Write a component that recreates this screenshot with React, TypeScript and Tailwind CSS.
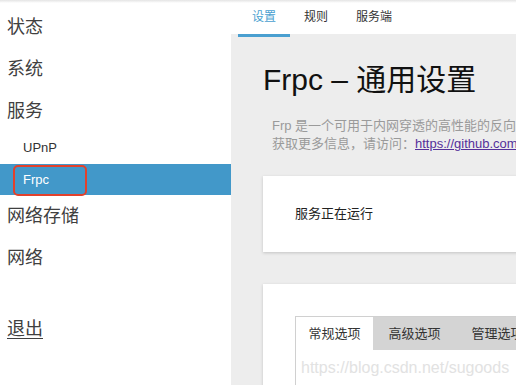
const font = { fontFamily: '"Liberation Sans", "Noto Sans CJK SC", sans-serif' };

const navTop = ['状态', '系统', '服务'];
const subItems = ['UPnP', 'Frpc'];
const navBottom = ['网络存储', '网络'];
const headTabs = ['设置', '规则', '服务端'];
const innerTabs = ['常规选项', '高级选项', '管理选项'];

export default function App() {
  return (
    <div
      className="relative flex w-[516px] h-[385px] overflow-hidden bg-white text-[#404040]"
      style={font}
    >
      <div className="pointer-events-none absolute inset-x-0 top-0 h-[3px] bg-gradient-to-b from-[#e4e4e4] to-transparent z-10" />

      {/* sidebar */}
      <aside className="w-[231px] shrink-0 bg-white pt-[6px]">
        {navTop.map((n) => (
          <div key={n} className="h-[42px] last:h-[40px] flex items-center pl-[7px] text-[18px] text-[#404040]">
            {n}
          </div>
        ))}
        {subItems.map((s) => {
          const active = s === 'Frpc';
          return (
            <div
              key={s}
              className={`relative flex items-center pl-[23px] text-[13px] ${active ? 'h-[31px] bg-[#4298c9] text-white' : 'h-[32px] text-[#333]'}`}
            >
              {s}
              {active && (
                <span className="absolute left-[13px] top-[1px] w-[74px] h-[31px] rounded-[5px] border-2 border-[#e2412c]" />
              )}
            </div>
          );
        })}
        {navBottom.map((n) => (
          <div key={n} className="h-[42px] flex items-center pl-[7px] text-[18px] text-[#404040]">
            {n}
          </div>
        ))}
        <div className="mt-[37px] pl-[7px] text-[18px] leading-[26px] text-[#404040] underline underline-offset-[3px]">
          退出
        </div>
      </aside>

      {/* main column */}
      <div className="w-[720px] shrink-0 flex flex-col">
        <header className="h-[34px] shrink-0 bg-white flex pl-[7px]">
          {headTabs.map((t, i) => (
            <div
              key={t}
              className={`relative px-[14px] flex items-center text-[12px] ${i === 0 ? 'text-[#4a9fd0]' : 'text-[#333]'}`}
            >
              {t}
              {i === 0 && <span className="absolute left-0 right-0 -bottom-[3px] h-[3px] bg-[#4a9fd0]" />}
            </div>
          ))}
        </header>

        <main className="flex-1 bg-[#ededed] pl-[32px] pt-[28px]">
          <h1 className="text-[30px] leading-[36px] text-[#111]">Frpc – 通用设置</h1>
          <div className="mt-[19px] pl-[9px] text-[13px] leading-[18px] text-[#9a9a9a] whitespace-nowrap">
            <p>Frp 是一个可用于内网穿透的高性能的反向代理应用，支持 tcp, udp, http, https 协议。</p>
            <p>
              获取更多信息，请访问：
              <span className="text-[#55309a] underline">https://github.com/fatedier/frp</span>
            </p>
          </div>

          <section className="mt-[23px] h-[76px] bg-white shadow-[0_1px_3px_rgba(0,0,0,0.18)] flex items-center pl-[32px] text-[13px] text-[#222]">
            服务正在运行
          </section>

          <section className="mt-[32px] h-[200px] bg-white shadow-[0_1px_3px_rgba(0,0,0,0.18)] pt-[32px] pl-[32px]">
            <div className="border-l border-t border-[#d0d0d0] h-full">
              <div className="flex h-[33px] bg-[#d4d4d4]">
                {innerTabs.map((t, i) => (
                  <div
                    key={t}
                    className={`flex items-center justify-center text-[13px] text-[#333] ${i === 0 ? 'w-[77px] bg-white' : 'w-[83px]'}`}
                  >
                    {t}
                  </div>
                ))}
              </div>
              <div className="pl-[5px] pt-[7px] text-[16px] leading-[22px] text-[#e2e2e2]">
                https://blog.csdn.net/sugoods
              </div>
            </div>
          </section>
        </main>
      </div>
    </div>
  );
}
